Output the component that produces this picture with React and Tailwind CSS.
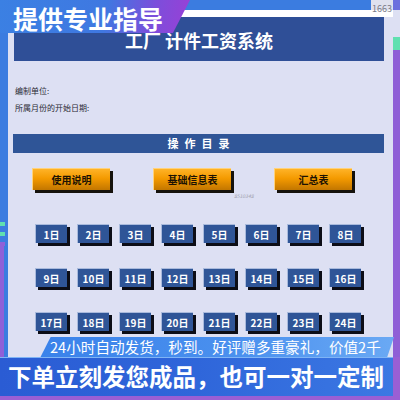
import React from 'react'

const font = { fontFamily: '"Noto Sans CJK SC", "Noto Sans", sans-serif' }

const days = Array.from({ length: 24 }, (_, i) => `${i + 1}日`)

const OrangeButton = ({ label }) => (
  <div className="w-[78px] h-[22px] flex items-center justify-center border-t border-l border-[#ffd27a] bg-[linear-gradient(180deg,#ffb327_0%,#f49a00_45%,#c27600_100%)] shadow-[3px_3px_0_#15120c] text-[10px] font-bold text-[#1b1203]">
    {label}
  </div>
)

const DayButton = ({ label }) => (
  <div className="w-[32px] h-[19px] flex items-center justify-center border-t border-l border-[#a9badc] bg-[#2f5597] shadow-[3px_3px_0_#0c0d16] text-[10px] font-bold text-white">
    {label}
  </div>
)

export default function App() {
  return (
    <div className="w-[400px] h-[400px] relative overflow-hidden bg-[#3b7ce0] flex" style={font}>
      {/* left edge */}
      <div className="w-[8px] flex flex-col">
        <div className="h-[222px]" />
        <div className="h-[4px] w-[5px] bg-[#5fe0b0]" />
        <div className="h-[6px]" />
        <div className="h-[4px] w-[5px] bg-[#5fe0b0]" />
        <div className="h-[6px]" />
        <div className="h-[4px] w-[5px] bg-[#8f60d8]" />
        <div className="flex-1 w-[4px] bg-[#8f60d8]" />
      </div>

      {/* sheet */}
      <div className="w-[385px] flex flex-col bg-[#dde0f3]">
        <div className="h-[10px] bg-[#3b7ce0] flex justify-end">
          <div className="w-[22px] bg-[#dfe1ee]" />
        </div>
        <div className="h-[7px] bg-white" />
        <div className="ml-[6px] mr-[9px] h-[44px] bg-[#2f4f97] flex items-center justify-center pt-[2px] text-white text-[18px] font-bold">
          工厂 计件工资系统
        </div>

        <div className="pl-[7px] pt-[24px] text-[8px] text-[#2a2a33]">
          <div className="leading-[12px]">编制单位:</div>
          <div className="leading-[12px] mt-[5px]">所属月份的开始日期:</div>
        </div>

        <div className="mt-[20px] ml-[5px] mr-[9px] h-[19px] bg-[#2f5597] flex items-center justify-center text-white text-[11px] font-bold tracking-[6px] pl-[6px]">
          操作目录
        </div>

        <div className="mt-[15px] relative flex pl-[24px] gap-[43px]">
          <OrangeButton label="使用说明" />
          <OrangeButton label="基础信息表" />
          <OrangeButton label="汇总表" />
          <span className="absolute left-[226px] top-[24px] text-[5px] italic text-[#9a9aa8]">8510348</span>
        </div>

        <div className="mt-[34px] pl-[27px] grid grid-cols-[repeat(8,32px)] gap-x-[10px] gap-y-[25px]">
          {days.map((d) => (
            <DayButton key={d} label={d} />
          ))}
        </div>
      </div>

      {/* right edge */}
      <div className="w-[7px] flex flex-col bg-[#8f5fd6]">
        <div className="h-[10px] bg-[#6c6fde]" />
        <div className="h-[27px] bg-[#dde0f3]" />
        <div className="h-[13px] bg-[#5fe0b0]" />
      </div>

      <span className="absolute right-[8px] top-[3px] text-[9px] leading-[12px] text-[#7a7a86]">1663</span>

      {/* promo badge */}
      <div className="absolute left-0 top-0 w-[190px] h-[36px]">
        <div className="absolute left-0 top-0 right-0 h-[33px] [clip-path:polygon(0_0,100%_0,91%_100%,0_100%)] bg-[linear-gradient(100deg,#3b80e3_0%,#3f78e1_55%,#7c4edb_80%,#9a3fd6_100%)]" />
        <div className="relative h-[36px] pl-[13px] text-white text-[25px] font-bold leading-[36px] whitespace-nowrap">
          提供专业指导
        </div>
      </div>

      {/* promo ribbon */}
      <div className="absolute left-[40px] right-[6px] bottom-[42px] h-[21px] [clip-path:polygon(3%_0,100%_0,98%_100%,0_100%)] bg-[linear-gradient(90deg,#3a82ea_0%,#4a90ee_55%,#6aa9f4_100%)]" />
      <div className="absolute left-[50px] bottom-[42px] h-[21px] flex items-center text-white text-[14.6px] leading-none whitespace-nowrap">
        24小时自动发货，秒到。好评赠多重豪礼，价值2千
      </div>

      {/* promo band */}
      <div className="absolute left-0 right-0 bottom-0 h-[43px] bg-[#9a5fd4] flex flex-col">
        <div className="h-[39px] mr-[7px] border-t border-[#7fb4f5] bg-[linear-gradient(90deg,#2a5cd4_0%,#2f66da_50%,#3b78e3_100%)] flex items-center pl-[8px] text-white text-[23.5px] font-bold leading-none whitespace-nowrap">
          下单立刻发您成品，也可一对一定制
        </div>
      </div>
    </div>
  )
}
